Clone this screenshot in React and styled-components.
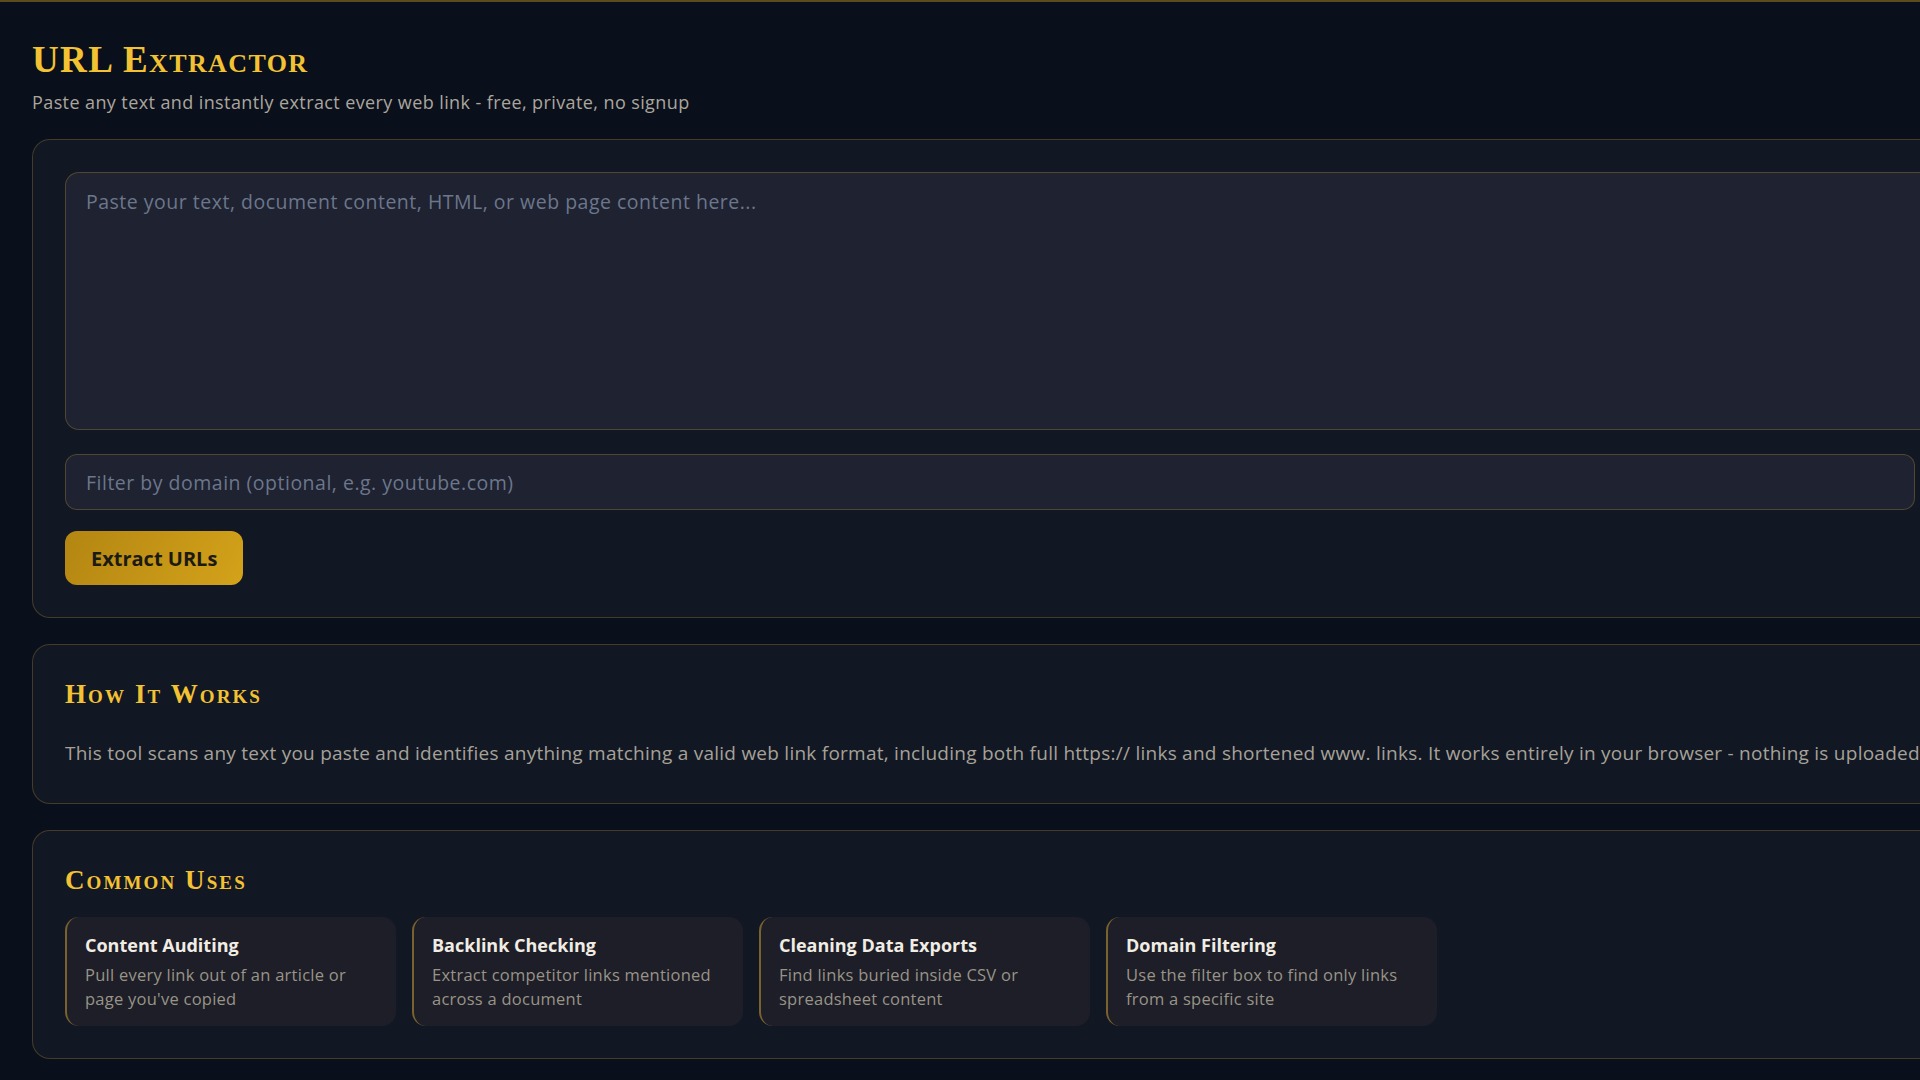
import React from "react";
import styled, { createGlobalStyle } from "styled-components";

const Global = createGlobalStyle`
  html, body {
    margin: 0;
    padding: 0;
    background: #0a0f1c;
    overflow: hidden;
  }
  body {
    font-family: "Open Sans", "Noto Sans", sans-serif;
    color: #a8a49a;
  }
  * { box-sizing: border-box; }
`;

const Page = styled.div`
  width: 2400px;
  min-height: 1080px;
  border-top: 2px solid #5c4b1c;
  padding: 36px 0 24px 32px;
  background: #0a0f1c;
`;

const Title = styled.h1`
  margin: 0;
  font-family: "Liberation Serif", serif;
  font-variant: small-caps;
  font-weight: 700;
  font-size: 37px;
  line-height: 44px;
  letter-spacing: 1.4px;
  color: #f2c233;
`;

const Subtitle = styled.p`
  margin: 8px 0 25px;
  font-size: 18px;
  line-height: 24px;
  letter-spacing: 0.4px;
  color: #aaa69c;
`;

const Panel = styled.section`
  width: 2300px;
  background: #121724;
  border: 1px solid rgba(196, 154, 52, 0.28);
  border-radius: 18px;
  padding: 32px;
  margin-bottom: 26px;
`;

const fieldStyle = `
  background: #1f2230;
  border: 1px solid rgba(196, 154, 52, 0.3);
  font-family: "Open Sans", "Noto Sans", sans-serif;
  font-size: 19.5px;
  letter-spacing: 0.5px;
  color: #d0ccc2;
  outline: none;
  &::placeholder { color: #6b778c; }
`;

const TextArea = styled.textarea`
  ${fieldStyle}
  display: block;
  width: 100%;
  height: 258px;
  resize: none;
  border-radius: 14px;
  padding: 15px 20px;
`;

const FilterInput = styled.input`
  ${fieldStyle}
  display: block;
  width: 1850px;
  height: 56px;
  margin-top: 24px;
  border-radius: 12px;
  padding: 0 20px;
`;

const Button = styled.button`
  display: block;
  margin-top: 21px;
  height: 54px;
  padding: 0 26px;
  border: none;
  border-radius: 12px;
  background: linear-gradient(120deg, #b38612 0%, #d4a21a 100%);
  color: #1b1a14;
  font-family: "Open Sans", "Noto Sans", sans-serif;
  font-weight: 700;
  font-size: 20px;
  cursor: pointer;
`;

const Heading = styled.h2`
  margin: 2px 0 ${(p) => p.$mb}px;
  font-family: "Liberation Serif", serif;
  font-variant: small-caps;
  font-weight: 700;
  font-size: 27px;
  line-height: 30px;
  letter-spacing: 2.1px;
  color: #f2c233;
`;

const Paragraph = styled.p`
  margin: 0 0 4px;
  font-size: 19px;
  line-height: 28px;
  letter-spacing: 0.25px;
  color: #a6a297;
`;

const Cards = styled.div`
  display: flex;
  gap: 16px;
`;

const Card = styled.div`
  width: 331px;
  height: 109px;
  background: #1d1e27;
  border-radius: 14px;
  border-left: 2px solid rgba(196, 154, 52, 0.55);
  padding: 16px 15px 16px 18px;
`;

const CardTitle = styled.div`
  font-weight: 700;
  font-size: 18px;
  line-height: 24px;
  color: #f1ede4;
  margin-bottom: 6px;
`;

const CardText = styled.div`
  font-size: 16.5px;
  line-height: 24px;
  letter-spacing: 0.25px;
  color: #999488;
`;

const uses = [
  ["Content Auditing", "Pull every link out of an article or page you've copied"],
  ["Backlink Checking", "Extract competitor links mentioned across a document"],
  ["Cleaning Data Exports", "Find links buried inside CSV or spreadsheet content"],
  ["Domain Filtering", "Use the filter box to find only links from a specific site"],
];

export default function App() {
  return (
    <>
      <Global />
      <Page>
        <Title>URL Extractor</Title>
        <Subtitle>Paste any text and instantly extract every web link - free, private, no signup</Subtitle>

        <Panel>
          <TextArea placeholder="Paste your text, document content, HTML, or web page content here..." />
          <FilterInput placeholder="Filter by domain (optional, e.g. youtube.com)" />
          <Button>Extract URLs</Button>
        </Panel>

        <Panel>
          <Heading $mb={30}>How It Works</Heading>
          <Paragraph>
            This tool scans any text you paste and identifies anything matching a valid web link format, including both full https:// links and shortened www. links. It works entirely in your browser - nothing is uploaded to any server.
          </Paragraph>
        </Panel>

        <Panel>
          <Heading $mb={22}>Common Uses</Heading>
          <Cards>
            {uses.map(([t, d]) => (
              <Card key={t}>
                <CardTitle>{t}</CardTitle>
                <CardText>{d}</CardText>
              </Card>
            ))}
          </Cards>
        </Panel>
      </Page>
    </>
  );
}
